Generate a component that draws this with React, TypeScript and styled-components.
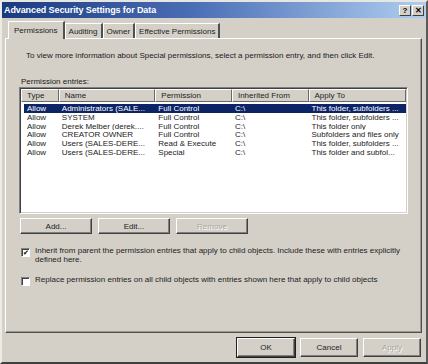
import styled, { createGlobalStyle } from 'styled-components'

const GlobalStyle = createGlobalStyle`
  html, body {
    margin: 0;
    padding: 0;
    background: #d4d0c8;
  }
  body {
    font-family: "Liberation Sans", Arial, sans-serif;
    font-size: 8px;
    color: #1a1a1a;
  }
`

const rows = [
  ['Allow', 'Administrators (SALE...', 'Full Control', 'C:\\', 'This folder, subfolders ...'],
  ['Allow', 'SYSTEM', 'Full Control', 'C:\\', 'This folder, subfolders ...'],
  ['Allow', 'Derek Melber (derek....', 'Full Control', 'C:\\', 'This folder only'],
  ['Allow', 'CREATOR OWNER', 'Full Control', 'C:\\', 'Subfolders and files only'],
  ['Allow', 'Users (SALES-DERE...', 'Read & Execute', 'C:\\', 'This folder, subfolders ...'],
  ['Allow', 'Users (SALES-DERE...', 'Special', 'C:\\', 'This folder and subfol...'],
]

const columns = [
  { label: 'Type', width: 38 },
  { label: 'Name', width: 97 },
  { label: 'Permission', width: 77 },
  { label: 'Inherited From', width: 77 },
  { label: 'Apply To', width: 98 },
]

const App = () => {
  return (
    <>
      <GlobalStyle />
      <Window>
        <TitleBar>
          <Title>Advanced Security Settings for Data</Title>
          <TitleButtons>
            <CaptionButton>?</CaptionButton>
            <CaptionButton>✕</CaptionButton>
          </TitleButtons>
        </TitleBar>

        <Body>
          <Tabs>
            <Tab $active>Permissions</Tab>
            <Tab>Auditing</Tab>
            <Tab>Owner</Tab>
            <Tab>Effective Permissions</Tab>
          </Tabs>

          <Panel>
            <Info>
              To view more information about Special permissions, select a permission entry, and then click Edit.
            </Info>
            <Label>Permission entries:</Label>

            <ListBox>
              <HeaderRow>
                {columns.map((c) => (
                  <HeaderCell key={c.label} style={{ width: c.width }}>
                    {c.label}
                  </HeaderCell>
                ))}
              </HeaderRow>
              {rows.map((r, i) => (
                <Row key={i} $selected={i === 0}>
                  {r.map((cell, j) => (
                    <Cell key={j} style={{ width: columns[j].width }}>
                      {cell}
                    </Cell>
                  ))}
                </Row>
              ))}
            </ListBox>

            <ButtonRow>
              <Button>Add...</Button>
              <Button>Edit...</Button>
              <Button disabled>Remove</Button>
            </ButtonRow>

            <CheckRow>
              <Check $checked>✔</Check>
              <CheckText>
                Inherit from parent the permission entries that apply to child objects. Include these with entries explicitly defined here.
              </CheckText>
            </CheckRow>

            <CheckRow>
              <Check />
              <CheckText>
                Replace permission entries on all child objects with entries shown here that apply to child objects
              </CheckText>
            </CheckRow>
          </Panel>

          <Footer>
            <Button $default $wide>OK</Button>
            <Button $wide>Cancel</Button>
            <Button $wide disabled>Apply</Button>
          </Footer>
        </Body>
      </Window>
    </>
  )
}

export default App

const Window = styled.div`
  width: 428px;
  height: 364px;
  box-sizing: border-box;
  background: #d4d0c8;
  border: 2px solid;
  border-color: #e8e6e0 #5a5a58 #404040 #ecebe6;
  display: flex;
  flex-direction: column;
`

const TitleBar = styled.div`
  height: 16px;
  flex: none;
  display: flex;
  align-items: center;
  justify-content: space-between;
  padding: 0 2px 0 2px;
  background: linear-gradient(to right, #1a3a80 0%, #4a6eb6 45%, #b0cef0 100%);
`

const Title = styled.div`
  color: #ffffff;
  font-weight: 700;
  font-size: 9px;
  letter-spacing: -0.1px;
`

const TitleButtons = styled.div`
  display: flex;
  gap: 1px;
`

const CaptionButton = styled.div`
  width: 12px;
  height: 11px;
  box-sizing: border-box;
  background: #d4d0c8;
  border: 1px solid;
  border-color: #ffffff #404040 #404040 #ffffff;
  font-size: 8px;
  font-weight: 700;
  line-height: 9px;
  text-align: center;
  color: #000;
`

const Body = styled.div`
  flex: 1;
  display: flex;
  flex-direction: column;
  padding: 2px 4px 0 3px;
`

const Tabs = styled.div`
  display: flex;
  align-items: flex-end;
  height: 18px;
  padding-left: 3px;
`

const Tab = styled.div<{ $active?: boolean }>`
  height: ${(p) => (p.$active ? 18 : 15)}px;
  box-sizing: border-box;
  padding: 0 ${(p) => (p.$active ? 5 : 3)}px;
  display: flex;
  align-items: center;
  border-top: 1px solid #ffffff;
  border-left: 1px solid #ffffff;
  border-right: 2px solid #505050;
  background: #d4d0c8;
  position: relative;
  margin-bottom: ${(p) => (p.$active ? -1 : 0)}px;
  z-index: ${(p) => (p.$active ? 1 : 0)};
  color: #222;
`

const Panel = styled.div`
  height: 295px;
  box-sizing: border-box;
  border: 1px solid;
  border-color: #ffffff #505050 #505050 #ffffff;
  box-shadow: inset -1px -1px 0 #9a9890;
  padding: 0 13px 0 13px;
  display: flex;
  flex-direction: column;
`

const Info = styled.div`
  margin: 12px 0 0 7px;
  line-height: 10px;
`

const Label = styled.div`
  margin: 16px 0 0 2px;
  line-height: 10px;
`

const ListBox = styled.div`
  margin-top: 0;
  height: 127px;
  box-sizing: border-box;
  background: #ffffff;
  border: 1px solid;
  border-color: #808080 #ffffff #ffffff #808080;
  box-shadow: inset 1px 1px 0 #404040, inset -1px -1px 0 #d4d0c8;
  padding: 1px 1px 0 1px;
`

const HeaderRow = styled.div`
  display: flex;
  height: 13px;
  margin-bottom: 2px;
`

const HeaderCell = styled.div`
  box-sizing: border-box;
  background: #d4d0c8;
  border: 1px solid;
  border-color: #ffffff #6a6a68 #6a6a68 #ffffff;
  padding-left: 5px;
  line-height: 11px;
  white-space: nowrap;
  overflow: hidden;
  color: #222;
`

const Row = styled.div<{ $selected?: boolean }>`
  display: flex;
  height: 8.8px;
  line-height: 9px;
  margin-left: 3px;
  background: ${(p) => (p.$selected ? '#0c2466' : 'transparent')};
  color: ${(p) => (p.$selected ? '#ffffff' : '#222')};
`

const Cell = styled.div`
  box-sizing: border-box;
  padding-left: 3px;
  white-space: nowrap;
  overflow: hidden;
  &:first-child {
    width: 35px !important;
  }
`

const ButtonRow = styled.div`
  display: flex;
  gap: 6px;
  margin-top: 4px;
  padding-left: 1px;
`

const Button = styled.button<{ $wide?: boolean; $default?: boolean }>`
  font-family: inherit;
  font-size: 8px;
  width: ${(p) => (p.$wide ? 58 : 72)}px;
  height: ${(p) => (p.$wide ? 19 : 16)}px;
  box-sizing: border-box;
  background: #d4d0c8;
  color: #222;
  padding: 0;
  border: 1px solid;
  border-color: #ffffff #404040 #404040 #ffffff;
  box-shadow: ${(p) =>
    p.$default ? '0 0 0 1px #202020, inset -1px -1px 0 #808080' : 'inset -1px -1px 0 #808080'};
  &:disabled {
    color: #a8a6a0;
    text-shadow: 1px 1px 0 #ffffff;
  }
`

const CheckRow = styled.div`
  display: flex;
  align-items: flex-start;
  gap: 5px;
  margin-top: 13px;
  padding-left: 2px;
  &:last-child {
    margin-top: 12px;
  }
`

const Check = styled.div<{ $checked?: boolean }>`
  width: 9px;
  height: 9px;
  flex: none;
  box-sizing: border-box;
  margin-top: 1px;
  background: #ffffff;
  border: 1px solid;
  border-color: #808080 #ffffff #ffffff #808080;
  box-shadow: inset 1px 1px 0 #404040;
  font-size: 7px;
  line-height: 7px;
  text-align: center;
  color: ${(p) => (p.$checked ? '#000' : 'transparent')};
`

const CheckText = styled.div`
  line-height: 8.5px;
  width: 380px;
  color: #222;
`

const Footer = styled.div`
  display: flex;
  justify-content: flex-end;
  gap: 5px;
  padding: 5px 1px 0 0;
`
